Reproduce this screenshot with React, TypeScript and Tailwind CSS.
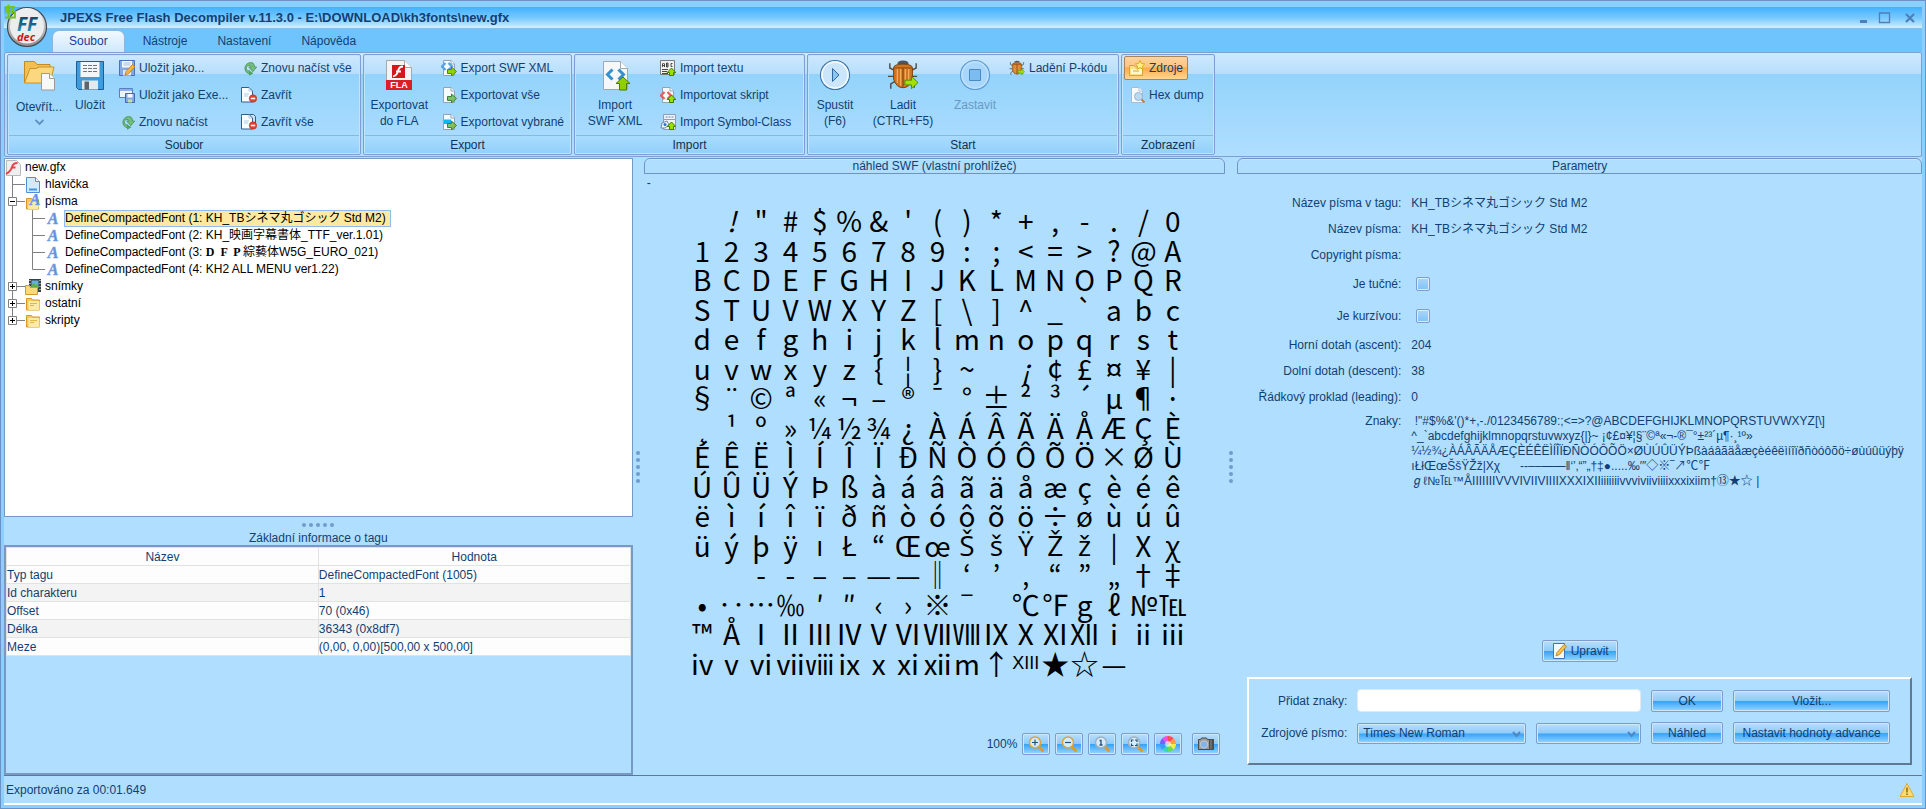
import { useState } from "react";
import type { ReactNode } from "react";
import { clsx } from "clsx";

type IconProps = { size?: number; children: ReactNode };

function Icon({ size = 16, children }: IconProps) {
  return (
    <svg width={size} height={size} viewBox={`0 0 ${size} ${size}`} className="shrink-0" aria-hidden="true">
      {children}
    </svg>
  );
}

const PAGE = "M2.5 .5h7.500l3.500 3.500v11.500h-11z";

function PageShape({ stroke = "#8fa3b8", fill = "#f7fafd" }: { stroke?: string; fill?: string }) {
  return (
    <>
      <path d={PAGE} fill={fill} stroke={stroke} />
      <path d="M10 .5v3.500h3.500" fill="#fff" stroke={stroke} />
    </>
  );
}

function GreenArrow({ fill = "#8fd400", stroke = "#4c8a00" }: { fill?: string; stroke?: string }) {
  return <path d="M6.500 9.500h4v-2.500l5 4.500-5 4.500v-2.500h-4z" fill={fill} stroke={stroke} />;
}

function UpArrow() {
  return <path d="M9.500 15.500v-3h-2.300l4.300-4.500 4.300 4.500h-2.300v3z" fill="#9be000" stroke="#3f7d00" />;
}

function SaveAsIcon() {
  return (
    <Icon>
      <path d="M.5.5h15v15h-15z" fill="#86a8e2" stroke="#4a70b8" />
      <path d="M3 1h10v6.500h-10z" fill="#f4f8ff" />
      <path d="M4.500 3h7M4.500 5h7" stroke="#a9bad6" />
      <path d="M4 10h8v5.500h-8z" fill="#dfe7f5" />
      <path d="M6 15l1-3.500 6.500-7 2.500 2.200-6.500 7z" fill="#f7b53c" stroke="#b97c18" strokeWidth=".8" />
    </Icon>
  );
}

function SaveExeIcon() {
  return (
    <Icon>
      <path d="M.5 1.500h13v9h-13z" fill="#eef4fd" stroke="#5a7fc0" />
      <path d="M1 2h12v2h-12z" fill="#8fb1e6" />
      <path d="M6.500 6.500h9v9h-9z" fill="#86a8e2" stroke="#4668ad" />
      <path d="M8.500 7h5v3.500h-5z" fill="#f4f8ff" />
      <path d="M9 12.500h4v3h-4z" fill="#bfe39b" />
    </Icon>
  );
}

function ReloadIcon() {
  return (
    <Icon>
      <path
        d="M12 3A5.800 5.800 0 1 0 8.500 14v-3.200A2.700 2.700 0 1 1 10.300 7H7.800l4 4.800L15.700 7H13.600A5.800 5.800 0 0 0 12 3z"
        fill="#72bd7c"
        stroke="#3f8a50"
        strokeWidth=".7"
      />
      <path d="M8 15.800v-5.300l4.500 2.700z" fill="#4ba35c" />
    </Icon>
  );
}

function CloseIcon({ all = false }: { all?: boolean }) {
  return (
    <Icon>
      {all && <path d="M4.500.5h8l2 2v11h-10z" fill="#cfe3f5" stroke="#2d5f8c" />}
      <path d="M.5 2.500v-2h7.500l3.500 3.500v11h-11z" fill="#fbfdff" stroke="#2d5f8c" />
      <path d="M8 .8v3.200h3.300M3 7h5M3 9h4" fill="none" stroke="#b4c9dc" />
      <circle cx="12" cy="11.500" r="3.700" fill="#e2442c" stroke="#b32a17" strokeWidth=".6" />
      <path d="M9.800 11.500h4.400" stroke="#fff" strokeWidth="1.600" />
    </Icon>
  );
}

function ExportXmlIcon() {
  return (
    <Icon>
      <PageShape />
      <path d="M4.500 3l-3.500 3.500 3.500 3.500M7.500 3l3.500 3.500-3.500 3.500" fill="none" stroke="#5aa2e8" strokeWidth="2.400" />
      <GreenArrow />
    </Icon>
  );
}

function ExportIcon({ selected = false }: { selected?: boolean }) {
  return (
    <Icon>
      <PageShape />
      {selected && <path d="M3 5.500h7v4.500h-7z" fill="#12b6ee" />}
      <GreenArrow fill="#7cc06a" stroke="#3f7f35" />
    </Icon>
  );
}

function ImportTextIcon() {
  return (
    <Icon>
      <path d="M.5.5h14v14h-14z" fill="#f2f2f0" stroke="#7a7a7a" />
      <path
        d="M2.500 7v-3l1-1 1 1v3M2.500 5.500h2M6.500 3h1.500v4h-1.500zM6.500 5h1.500M12.500 3.500h-1.500v3h1.500M2 9.500h6M2 11.500h5M2 13.500h6"
        fill="none"
        stroke="#333"
        strokeWidth=".9"
      />
      <UpArrow />
    </Icon>
  );
}

function ImportScriptIcon() {
  return (
    <Icon>
      <PageShape />
      <path d="M4.500 5l-3.500 3.500 3.500 3.500M7.500 5l3.500 3.500-3.500 3.500" fill="none" stroke="#ea5f58" strokeWidth="2.400" />
      <UpArrow />
    </Icon>
  );
}

function ImportSymbolIcon() {
  return (
    <Icon>
      <path d="M3.500.5h12v5h-12zM3.500 5.500h12v10h-12z" fill="#eef3fa" stroke="#8c9db5" />
      <path d="M5.500 3h8" stroke="#6f87a8" strokeDasharray="2 1" />
      <path d="M1 14l1-5 5-2 2 4-4 3z" fill="#f5f8fc" stroke="#6f87a8" />
      <circle cx="5" cy="10.500" r="1.500" fill="#2b6fd0" />
      <UpArrow />
    </Icon>
  );
}

function BugShape() {
  return (
    <>
      <path
        d="M9 12L3 9V4M25 12l6-3V4M8 18H1M26 18h6M9 23l-5 3v5M25 23l4 3v4"
        fill="none"
        stroke="#4e4a46"
        strokeWidth="1.500"
      />
      <path d="M11 5q0-4 6-4t6 4z" fill="#4b5563" />
      <path d="M7 9q0-4 10-4t10 4v12q-3 9-10 9T7 21z" fill="#cf7420" stroke="#7a3c08" />
      <path d="M11 10v15M14.500 10v18M19.500 10v18M23 10v15" stroke="#f0ac5c" strokeWidth="1.400" />
      <path d="M17 9v20" stroke="#7a3c08" />
      <path d="M7.500 9h19" stroke="#8d4a0e" />
      <path d="M19 22h7v-4l7 6.500-7 6.500v-4h-7z" fill="#a4e000" stroke="#4c8a00" />
    </>
  );
}

function SourcesIcon() {
  return (
    <Icon>
      <path d="M.5 5.500h5l1 1.500h7v8.500h-13z" fill="#fbe08a" stroke="#d9a42e" />
      <path d="M2 9h11v5h-11z" fill="#fff6cf" />
      <path d="M4 11h6" stroke="#d9a42e" />
      <path d="M11 .5l1.500 3 3.200.4-2.300 2.200.6 3.200-3-1.600-3 1.600.6-3.200L6.300 3.900l3.200-.4z" fill="#fff08a" stroke="#dfa923" />
    </Icon>
  );
}

function HexIcon() {
  return (
    <Icon>
      <PageShape stroke="#a9bccf" />
      <circle cx="9.500" cy="9.500" r="4" fill="#bcd9f5" stroke="#93b4d6" />
      <path d="M12.500 12.500l3 3" stroke="#c9803f" strokeWidth="2" />
    </Icon>
  );
}

function OpenIcon() {
  return (
    <Icon size={32}>
      <path d="M1.500 24V2.500h10l2.500 3h13v4" fill="#f4bf52" stroke="#c58a1f" />
      <path d="M1.500 24L7 9.500h6l3-1.500h15l-4 16z" fill="#fbd880" stroke="#c9922a" />
      <path d="M18.500 14.500h8l5 5v11.500h-13z" fill="#f8f8f8" stroke="#9a9a9a" />
      <path d="M26.500 14.500v5h5" fill="#fff" stroke="#9a9a9a" />
    </Icon>
  );
}

function SaveIcon() {
  return (
    <Icon size={32}>
      <path d="M2.500 2.500h27v28h-25l-2-2z" fill="#3f9bdc" stroke="#1c5f96" />
      <path d="M6.500 3h19v15h-19z" fill="#f3f5f7" />
      <path d="M9 6.500h14M9 9.500h14M9 12.500h14" stroke="#6f7780" strokeDasharray="4 1" />
      <path d="M8 21.500h16v9h-16z" fill="#e3e9ee" />
      <path d="M10.500 22.500h4.500v8h-4.500z" fill="#5a6570" />
    </Icon>
  );
}

function FlaIcon() {
  return (
    <Icon size={32}>
      <path d="M3.500 1.500h18l7 7v20h-25z" fill="#f4f4f4" stroke="#a8a8a8" />
      <path d="M21.500 1.500v7h7" fill="#fff" stroke="#a8a8a8" />
      <path d="M9 6h13v13h-13z" fill="#d8141c" />
      <path d="M20 7.500q-4 0-5 4.500t-5 5.500M13 12.500h5" fill="none" stroke="#fff" strokeWidth="1.800" />
      <path d="M3 21h26v10h-26z" fill="#dc1f26" />
      <text x="16" y="29" textAnchor="middle" fontSize="9" fontWeight="bold" fill="#fff" fontFamily="Liberation Sans, sans-serif">
        FLA
      </text>
    </Icon>
  );
}

function ImportXmlIcon() {
  return (
    <Icon size={32}>
      <path d="M4.500 2.500h17l7 7v21h-24z" fill="#f6f7f8" stroke="#9fa8b0" />
      <path d="M21.500 2.500v7h7" fill="#fff" stroke="#9fa8b0" />
      <path d="M13.500 10.500l-5 5 5 5M19.500 10.500l5 5-5 5" fill="none" stroke="#3590cf" strokeWidth="3" />
      <path d="M20.500 31v-6.500h-3.500l7-6.500 7 6.500h-3.500v6.500z" fill="#8ed000" stroke="#4c7d00" />
    </Icon>
  );
}

function PlayIcon() {
  return (
    <Icon size={32}>
      <circle cx="16" cy="16" r="14.500" fill="#cbe6fb" stroke="#3f74a8" strokeWidth="1.200" />
      <circle cx="16" cy="16" r="13" fill="none" stroke="#f2f9ff" strokeWidth="1.600" />
      <path d="M13.500 9.500l6.500 6.500-6.500 6.500z" fill="#8cc4f0" stroke="#2f6ba3" />
    </Icon>
  );
}

function StopIcon() {
  return (
    <Icon size={32}>
      <circle cx="16" cy="16" r="14.500" fill="#a9d7fb" stroke="#5f9bd0" strokeWidth="1.200" />
      <circle cx="16" cy="16" r="13" fill="none" stroke="#bfe1fb" strokeWidth="1.400" />
      <path d="M10.500 10.500h11v11h-11z" fill="#7dbcf0" stroke="#4a8ac2" />
    </Icon>
  );
}

function Logo() {
  return (
    <svg width="48" height="46" viewBox="0 0 48 46" className="absolute top-0.5 left-0.5 z-10" role="img" aria-label="FFDec">
      <defs>
        <linearGradient id="logo-ring" x1="0" y1="0" x2="0" y2="1">
          <stop offset="0" stopColor="#f6f6f6" />
          <stop offset="1" stopColor="#8c8c8c" />
        </linearGradient>
        <linearGradient id="logo-ff" x1="0" y1="0" x2="0" y2="1">
          <stop offset="0" stopColor="#1c2f3c" />
          <stop offset=".5" stopColor="#17658f" />
          <stop offset="1" stopColor="#2fb4ea" />
        </linearGradient>
      </defs>
      <circle cx="24" cy="24" r="19.500" fill="url(#logo-ring)" stroke="#3e4a55" strokeWidth="1.200" />
      <circle cx="24" cy="23.500" r="17" fill="#ebedee" />
      <text x="24" y="28" textAnchor="middle" fontSize="19" fontWeight="bold" fontStyle="italic" fill="url(#logo-ff)" fontFamily="Open Sans, sans-serif">
        FF
      </text>
      <text x="23" y="38" textAnchor="middle" fontSize="11" fontWeight="bold" fontStyle="italic" fill="#cc1719" fontFamily="Open Sans, sans-serif">
        dec
      </text>
      <path d="M12 4H3v4.500h9v6H2M5.500 1.500v13.500M9 3v8" fill="none" stroke="#74c41c" strokeWidth="1.800" />
    </svg>
  );
}

const raised =
  "border border-[#7d9dcf] bg-[linear-gradient(#b9defc_0%,#8fcbfb_48%,#37a3fb_52%,#9ad6ff_100%)] shadow-[inset_0_0_0_1px_#cfe6fb] rounded-xs";

function LargeButton({
  icon,
  lines,
  width,
  disabled,
  menu,
}: {
  icon: ReactNode;
  lines: string[];
  width: string;
  disabled?: boolean;
  menu?: boolean;
}) {
  return (
    <button
      type="button"
      disabled={disabled}
      className={clsx("flex flex-col items-center pt-1 leading-4", width, disabled && "text-[#6a9ac4]")}
    >
      {icon}
      <span className={clsx("flex flex-col whitespace-nowrap", menu ? "pt-2" : "pt-1.5")}>
        {lines.map((line) => (
          <span key={line}>{line}</span>
        ))}
      </span>
      {menu && (
        <svg width="9" height="7" viewBox="0 0 9 7" className="mt-1" aria-hidden="true">
          <path d="M.5 1l4 4 4-4" fill="none" stroke="#5f8fc4" strokeWidth="1.800" />
        </svg>
      )}
    </button>
  );
}

function SmallButton({ icon, label, active }: { icon: ReactNode; label: string; active?: boolean }) {
  return (
    <button
      type="button"
      className={clsx(
        "flex h-6 items-center gap-1 self-start rounded-xs border px-1 whitespace-nowrap",
        active
          ? "border-[#a5855a] bg-[linear-gradient(#fbd3a0_0%,#ffc57c_45%,#ffaa48_50%,#ffd791_100%)]"
          : "border-transparent"
      )}
    >
      {icon}
      {label}
    </button>
  );
}

function SmallColumn({ className, children }: { className?: string; children: ReactNode }) {
  return <div className={clsx("flex flex-col gap-[3px] pt-px", className)}>{children}</div>;
}

function RibbonGroup({ title, width, children }: { title: string; width: string; children: ReactNode }) {
  return (
    <section
      className={clsx(
        "flex h-[101px] shrink-0 flex-col rounded-xs border border-[#7d9fd3] shadow-[inset_0_0_0_1px_#c4e2fb]",
        width
      )}
    >
      <div className="flex flex-1 px-0.5">{children}</div>
      <h2 className="mx-px mb-px h-[18px] border-t border-[#83bbe8] bg-[linear-gradient(#a9dcff,#93d0fb)] text-center leading-[19px] text-[#15304f]">
        {title}
      </h2>
    </section>
  );
}

function Ribbon() {
  return (
    <div className="flex gap-0.5 rounded-xs border border-[#7d9fd3] bg-[linear-gradient(#cfe9fe_0px,#b6dffc_21px,#93d3fb_21px,#b0deff_100%)] px-0.5 py-px">
      <RibbonGroup title="Soubor" width="w-[354px]">
        <LargeButton icon={<OpenIcon />} lines={["Otevřít..."]} width="w-[58px]" menu />
        <LargeButton icon={<SaveIcon />} lines={["Uložit"]} width="w-[44px]" />
        <SmallColumn className="w-[122px] pl-0.5">
          <SmallButton icon={<SaveAsIcon />} label="Uložit jako..." />
          <SmallButton icon={<SaveExeIcon />} label="Uložit jako Exe..." />
          <SmallButton icon={<ReloadIcon />} label="Znovu načíst" />
        </SmallColumn>
        <SmallColumn className="pl-0.5">
          <SmallButton icon={<ReloadIcon />} label="Znovu načíst vše" />
          <SmallButton icon={<CloseIcon />} label="Zavřít" />
          <SmallButton icon={<CloseIcon all />} label="Zavřít vše" />
        </SmallColumn>
      </RibbonGroup>
      <RibbonGroup title="Export" width="w-[209px]">
        <LargeButton icon={<FlaIcon />} lines={["Exportovat", "do FLA"]} width="w-[70px]" />
        <SmallColumn className="pl-[3px]">
          <SmallButton icon={<ExportXmlIcon />} label="Export SWF XML" />
          <SmallButton icon={<ExportIcon />} label="Exportovat vše" />
          <SmallButton icon={<ExportIcon selected />} label="Exportovat vybrané" />
        </SmallColumn>
      </RibbonGroup>
      <RibbonGroup title="Import" width="w-[231px]">
        <LargeButton icon={<ImportXmlIcon />} lines={["Import", "SWF XML"]} width="w-[76px]" />
        <SmallColumn className="pl-0.5">
          <SmallButton icon={<ImportTextIcon />} label="Import textu" />
          <SmallButton icon={<ImportScriptIcon />} label="Importovat skript" />
          <SmallButton icon={<ImportSymbolIcon />} label="Import Symbol-Class" />
        </SmallColumn>
      </RibbonGroup>
      <RibbonGroup title="Start" width="w-[312px]">
        <LargeButton icon={<PlayIcon />} lines={["Spustit", "(F6)"]} width="w-[50px]" />
        <LargeButton
          icon={
            <svg width="32" height="32" viewBox="0 0 34 33" className="shrink-0" aria-hidden="true">
              <BugShape />
            </svg>
          }
          lines={["Ladit", "(CTRL+F5)"]}
          width="w-[86px]"
        />
        <LargeButton icon={<StopIcon />} lines={["Zastavit"]} width="w-[58px]" disabled />
        <SmallColumn>
          <SmallButton
            icon={
              <svg width="16" height="16" viewBox="0 0 34 33" className="shrink-0" aria-hidden="true">
                <BugShape />
              </svg>
            }
            label="Ladění P-kódu"
          />
        </SmallColumn>
      </RibbonGroup>
      <RibbonGroup title="Zobrazení" width="w-[94px]">
        <SmallColumn>
          <SmallButton icon={<SourcesIcon />} label="Zdroje" active />
          <SmallButton icon={<HexIcon />} label="Hex dump" />
        </SmallColumn>
      </RibbonGroup>
    </div>
  );
}

function FolderShape() {
  return (
    <>
      <path d="M1.500 2.500h5l1 1.500h7v10h-13z" fill="#f7c95a" stroke="#d59a26" />
      <path d="M3.500 5h11v9h-11z" fill="#fdeaa6" />
      <path d="M5 7.500h7M5 9.500h4" stroke="#e5b548" />
    </>
  );
}

function FontLetter() {
  return (
    <text
      x="8"
      y="13"
      textAnchor="middle"
      fontSize="16"
      fontWeight="bold"
      fontStyle="italic"
      fontFamily="Liberation Serif, serif"
      fill="#5f8fdc"
      stroke="#7aa3e4"
      strokeWidth=".5"
    >
      A
    </text>
  );
}

const treeIcons: Record<string, ReactNode> = {
  file: (
    <Icon>
      <path d="M1.500.5h10l4 4v11h-14z" fill="#f0efef" stroke="#b9b9b9" />
      <path d="M12.500 3q-4.500 0-5.500 4t-6 7M6.500 7.500h4" fill="none" stroke="#e8404a" strokeWidth="2" />
    </Icon>
  ),
  header: (
    <Icon>
      <path d="M1.500.5h9l4 4v11h-13z" fill="#d3e9fd" stroke="#4f8fd6" />
      <path d="M10.500.5v4h4" fill="#fff" stroke="#4f8fd6" />
      <path d="M4 11.500h8v2h-8z" fill="#3f95ea" />
    </Icon>
  ),
  fonts: (
    <Icon>
      <path d="M1.500 4.500h5l1 1.500h6v9h-12z" fill="#f7c95a" stroke="#d59a26" />
      <path d="M4 8h11l-2 7h-10z" fill="#fdeaa6" />
      <g transform="translate(2 -2)">
        <FontLetter />
      </g>
    </Icon>
  ),
  font: (
    <Icon>
      <FontLetter />
    </Icon>
  ),
  frames: (
    <Icon>
      <path d="M4 0h12v13h-12z" fill="#3a3f45" />
      <path d="M6.500 1.500h7v7h-7z" fill="#5fb0e8" />
      <path d="M6.500 6l2-2 2 2 1-1 2 2v2h-7z" fill="#5fae4b" />
      <path d="M5 1v11M15 1v11" stroke="#fff" strokeDasharray="1 2" />
      <path d="M.5 6.500h4l1 2h7v7h-12z" fill="#fbd878" stroke="#d59a26" />
    </Icon>
  ),
  folder: (
    <Icon>
      <FolderShape />
    </Icon>
  ),
};

type Connector = "branch" | "line" | "last" | "minus" | "plus" | "plusLast";

function TreeConnector({ kind }: { kind: Connector }) {
  const box = kind === "minus" || kind === "plus" || kind === "plusLast";
  const bottom = kind === "last" || kind === "plusLast" ? 8.5 : 17;
  return (
    <svg width="20" height="17" viewBox="0 0 20 17" className="shrink-0" aria-hidden="true">
      <path d={`M7.500 0V${bottom}`} stroke="#808080" />
      {kind !== "line" && <path d="M7.500 8.500H20" stroke="#808080" />}
      {box && <path d="M3.500 4.500h8v8h-8z" fill="#fff" stroke="#808080" />}
      {box && <path d="M5 8.500h5" stroke="#000" />}
      {(kind === "plus" || kind === "plusLast") && <path d="M7.500 6v5" stroke="#000" />}
    </svg>
  );
}

type TreeRow = { id: string; connectors: Connector[]; icon: string; label: ReactNode };

const treeRows: TreeRow[] = [
  { id: "root", connectors: [], icon: "file", label: "new.gfx" },
  { id: "header", connectors: ["branch"], icon: "header", label: "hlavička" },
  { id: "fonts", connectors: ["minus"], icon: "fonts", label: "písma" },
  { id: "font1", connectors: ["line", "branch"], icon: "font", label: "DefineCompactedFont (1: KH_TBシネマ丸ゴシック Std M2)" },
  { id: "font2", connectors: ["line", "branch"], icon: "font", label: "DefineCompactedFont (2: KH_映画字幕書体_TTF_ver.1.01)" },
  {
    id: "font3",
    connectors: ["line", "branch"],
    icon: "font",
    label: (
      <>
        DefineCompactedFont (3: <b className="font-['Liberation_Serif',serif] whitespace-pre">{"D  F  P "}</b>綜藝体W5G_EURO_021)
      </>
    ),
  },
  { id: "font4", connectors: ["line", "last"], icon: "font", label: "DefineCompactedFont (4: KH2 ALL MENU ver1.22)" },
  { id: "frames", connectors: ["plus"], icon: "frames", label: "snímky" },
  { id: "others", connectors: ["plus"], icon: "folder", label: "ostatní" },
  { id: "scripts", connectors: ["plusLast"], icon: "folder", label: "skripty" },
];

function TagTree() {
  const [selected, setSelected] = useState("font1");

  return (
    <ul className="min-h-0 flex-[362] border border-[#7699c8] bg-white text-black">
      {treeRows.map((row) => (
        <li key={row.id} className="flex h-[17px] items-center">
          {row.connectors.map((kind, i) => (
            <TreeConnector key={i} kind={kind} />
          ))}
          {treeIcons[row.icon]}
          <button
            type="button"
            onClick={() => setSelected(row.id)}
            className={clsx(
              "ml-[3px] h-[17px] border pr-1 leading-[15px] whitespace-nowrap",
              selected === row.id ? "border-[#8fbbee] bg-[#fee9a0]" : "border-transparent"
            )}
          >
            {row.label}
          </button>
        </li>
      ))}
    </ul>
  );
}

const tagInfo = [
  ["Typ tagu", "DefineCompactedFont (1005)"],
  ["Id charakteru", "1"],
  ["Offset", "70 (0x46)"],
  ["Délka", "36343 (0x8df7)"],
  ["Meze", "(0,00, 0,00)[500,00 x 500,00]"],
];

function TagInfo() {
  return (
    <div className="min-h-0 flex-[229] border-2 border-[#7699c8]">
      <table className="w-full table-fixed border-collapse text-left">
        <thead>
          <tr className="h-[18px] bg-[#fdfdfd]">
            <th className="border border-[#e2e2e2] p-0 text-center leading-4 font-normal">Název</th>
            <th className="border border-[#e2e2e2] p-0 text-center leading-4 font-normal">Hodnota</th>
          </tr>
        </thead>
        <tbody>
          {tagInfo.map(([name, value]) => (
            <tr key={name} className="h-[18px] bg-[#fdfdfd] even:bg-[#f3f3f3]">
              <td className="border border-[#e2e2e2] p-0 leading-4">{name}</td>
              <td className="border border-[#e2e2e2] p-0 leading-4">{value}</td>
            </tr>
          ))}
        </tbody>
      </table>
    </div>
  );
}

function Grip({ vertical }: { vertical?: boolean }) {
  return (
    <div className={clsx("flex items-center justify-center", vertical ? "flex-col gap-px" : "h-[15px] gap-px")}>
      {[0, 1, 2, 3, 4].map((dot) => (
        <span key={dot} className={clsx("size-1 rounded-full bg-[#6f9ccc]", vertical ? "my-px" : "mx-px")} />
      ))}
    </div>
  );
}

const glyphRows: string[][] = [
  ["", ..."!\"#$%&'()*+,-./0"],
  [..."123456789:;<=>?@A"],
  [..."BCDEFGHIJKLMNOPQR"],
  [..."STUVWXYZ[\\]^_`abc"],
  [..."defghijklmnopqrst"],
  [..."uvwxyz{¦}~", "", ..."¡¢£¤¥|"],
  [..."§¨©ª«¬–®¯°±²³´µ¶·"],
  [..."¸¹º»¼½¾¿ÀÁÂÃÄÅÆÇÈ"],
  [..."ÉÊËÌÍÎÏÐÑÒÓÔÕÖ×ØÙ"],
  [..."ÚÛÜÝÞßàáâãäåæçèéê"],
  [..."ëìíîïðñòóôõö÷øùúû"],
  [..."üýþÿıŁ“ŒœŠšŸŽž|Xχ"],
  ["", "", ..."--––——‖‘’‚“”„†‡"],
  [..."•‥…‰′″‹›※‾", "", ..."℃℉gℓ№℡"],
  [..."™ÅⅠⅡⅢⅣⅤⅥⅦⅧⅨⅩⅪⅫⅰⅱⅲ"],
  [..."ⅳⅴⅵⅶⅷⅸⅹⅺⅻm↑", "XIII", ..."★☆—", "", ""],
];

// letters that the CJK family has no glyph for
const latinOnly = new Set("ıŁŠšŸŽžχ");

function GlyphGrid() {
  return (
    <div className="flex justify-center pl-1.5">
      <div className="grid h-[472px] w-[500px] grid-cols-17 grid-rows-16 font-['Noto_Sans_CJK_JP',sans-serif] text-[28px] leading-[29px] text-black">
        {glyphRows.flatMap((row, r) =>
          row.map((glyph, c) => (
            <span
              key={`${r}-${c}`}
              className={clsx(
                "flex items-center justify-center",
                glyph.length > 1 && "font-['Liberation_Sans',sans-serif] text-lg",
                latinOnly.has(glyph) && "font-['Open_Sans',sans-serif]",
                (glyph === "!" || glyph === "¡") && "italic"
              )}
            >
              {glyph}
            </span>
          ))
        )}
      </div>
    </div>
  );
}

function Lens({ ring = "#e0a43a", children }: { ring?: string; children: ReactNode }) {
  return (
    <>
      <path d="M10.500 10.500l4 4" stroke="#e09a2a" strokeWidth="3" strokeLinecap="round" />
      <circle cx="7" cy="6.500" r="5.500" fill="#d6ecfb" stroke={ring} strokeWidth="1.500" />
      {children}
    </>
  );
}

const wheelColors = ["#ff4d4d", "#ff9c40", "#f4ee3c", "#66e04a", "#35d6b4", "#3b9cff", "#7a5cff", "#f04fe0"];

const previewTools = [
  {
    label: "Přiblížit",
    icon: (
      <Lens>
        <path d="M4 6.500h6M7 3.500v6" stroke="#274f74" strokeWidth="1.200" />
      </Lens>
    ),
  },
  {
    label: "Oddálit",
    icon: (
      <Lens>
        <path d="M4 6.500h6" stroke="#274f74" strokeWidth="1.200" />
      </Lens>
    ),
  },
  {
    label: "Původní velikost",
    icon: (
      <Lens ring="#9fb0bf">
        <path d="M5.500 4.500h1.500v4.500M5.500 9h3" fill="none" stroke="#274f74" strokeWidth="1.300" />
      </Lens>
    ),
  },
  {
    label: "Přizpůsobit",
    icon: (
      <Lens ring="#9fb0bf">
        <path d="M4.500 6v-2h2M8 4h2v2M10 7.500v2h-2M6.500 9.500h-2v-2" fill="none" stroke="#274f74" strokeWidth="1.200" />
      </Lens>
    ),
  },
  {
    label: "Barva pozadí",
    icon: (
      <>
        {wheelColors.map((color, i) => (
          <path key={color} d="M8 8V0A8 8 0 0 1 13.700 2.300z" fill={color} transform={`rotate(${i * 45} 8 8)`} />
        ))}
        <circle cx="8" cy="8" r="3" fill="#fff" opacity=".6" />
      </>
    ),
  },
];

function PanelTitle({ children }: { children: ReactNode }) {
  return (
    <h2 className="h-4 rounded-t-md border border-[#6f93c6] text-center leading-[15px] shadow-[inset_0_1px_0_#c9e6fd]">
      {children}
    </h2>
  );
}

function Preview() {
  return (
    <section className="flex min-h-0 flex-col">
      <PanelTitle>náhled SWF (vlastní prohlížeč)</PanelTitle>
      <p className="h-8 pl-[3px] leading-[18px]">-</p>
      <GlyphGrid />
      <div className="mt-auto mb-5 flex items-center justify-end gap-[5px] pr-[5px]">
        <span>100%</span>
        {previewTools.map((tool) => (
          <button key={tool.label} type="button" aria-label={tool.label} className={clsx("flex h-[22px] w-7 items-center justify-center", raised)}>
            <Icon>{tool.icon}</Icon>
          </button>
        ))}
        <button type="button" aria-label="Snímek" className={clsx("ml-[5px] flex h-[22px] w-7 items-center justify-center", raised)}>
          <Icon>
            <path d="M.5 3.500h2l1-1.500h5l1 1.500h6v10h-15z" fill="#9a9a9a" stroke="#4a4a4a" />
            <path d="M11 3h4.500v11H11z" fill="#4f4f4f" />
            <path d="M13 4v9" stroke="#8a8a8a" />
            <circle cx="6" cy="8.500" r="3.700" fill="#7fb4ea" stroke="#c9c9c9" />
          </Icon>
        </button>
      </div>
    </section>
  );
}

const charLines = [
  " !\"#$%&'()*+,-./0123456789:;<=>?@ABCDEFGHIJKLMNOPQRSTUVWXYZ[\\]",
  "^_`abcdefghijklmnopqrstuvwxyz{|}~ ¡¢£¤¥¦§¨©ª«¬-®¯°±²³´µ¶·¸¹º»",
  "¼½¾¿ÀÁÂÃÄÅÆÇÈÉÊËÌÍÎÏÐÑÒÓÔÕÖ×ØÙÚÛÜÝÞßàáâãäåæçèéêëìíîïðñòóôõö÷øùúûüýþÿ",
  "ıŁłŒœŠšŸŽž|Xχ      ‐-––—―‖‘’‚“”„†‡●.....‰′″◇※‾↗℃℉",
  "ℊℓ№℡™ÅIIIIIIIVVVIVIIVIIIIXXXIXIIiiiiiiivvviviiviiiixxxixiim†⑬★☆ |",
];

function Param({ label, children }: { label: string; children?: ReactNode }) {
  return (
    <div className="flex h-[26px] items-center gap-2.5">
      <dt className="w-[164px] text-right">{label}</dt>
      <dd>{children}</dd>
    </div>
  );
}

function CheckParam({ id, label }: { id: string; label: string }) {
  return (
    <div className="flex h-8 items-center gap-2.5">
      <label htmlFor={id} className="w-[164px] text-right">
        {label}
      </label>
      <input
        id={id}
        type="checkbox"
        className="ml-[5px] size-3.5 appearance-none rounded-xs border border-[#7d9dcf] bg-[linear-gradient(#a9d7fc,#7cc3fb)] shadow-[inset_0_0_0_1px_#d8ecfd] checked:bg-[#2f8de0]"
      />
    </div>
  );
}

function PushButton({ children, className }: { children: ReactNode; className?: string }) {
  return (
    <button type="button" className={clsx("h-[22px] text-center whitespace-nowrap", raised, className)}>
      {children}
    </button>
  );
}

function Dropdown({ id, options, label, className }: { id: string; options: string[]; label?: string; className?: string }) {
  return (
    <span className={clsx("relative block", className)}>
      <select id={id} aria-label={label} className={clsx("block h-[21px] w-full appearance-none pl-[5px] leading-[19px]", raised)}>
        {options.map((option) => (
          <option key={option}>{option}</option>
        ))}
      </select>
      <svg width="9" height="7" viewBox="0 0 9 7" className="pointer-events-none absolute top-2 right-[5px]" aria-hidden="true">
        <path d="M1 1l3.500 4L8 1" fill="none" stroke="#4f86c2" strokeWidth="2" />
      </svg>
    </span>
  );
}

function Parameters() {
  const [chars, setChars] = useState("");

  return (
    <section className="flex min-h-0 flex-col">
      <PanelTitle>Parametry</PanelTitle>
      <dl className="pt-4">
        <Param label="Název písma v tagu:">KH_TBシネマ丸ゴシック Std M2</Param>
        <Param label="Název písma:">KH_TBシネマ丸ゴシック Std M2</Param>
        <Param label="Copyright písma:" />
      </dl>
      <CheckParam id="bold" label="Je tučné:" />
      <CheckParam id="italic" label="Je kurzívou:" />
      <dl>
        <Param label="Horní dotah (ascent):">204</Param>
        <Param label="Dolní dotah (descent):">38</Param>
        <Param label="Řádkový proklad (leading):">0</Param>
        <div className="flex gap-2.5 pt-1 leading-[15px]">
          <dt className="w-[164px] text-right">Znaky:</dt>
          <dd>
            {charLines.map((line) => (
              <span key={line} className="block h-[15px] whitespace-pre">
                {line}
              </span>
            ))}
          </dd>
        </div>
      </dl>
      <div className="mt-auto flex justify-center">
        <PushButton className="flex items-center gap-1 px-2">
          <Icon>
            <path d="M2.500.5h11v15h-11z" fill="#f3f8fe" stroke="#3e74b8" />
            <path d="M5 13l1-3.500 7-8 2.500 2-7 8z" fill="#f7c04a" stroke="#b97c18" strokeWidth=".8" />
          </Icon>
          Upravit
        </PushButton>
      </div>
      <form
        className="mx-2.5 mt-[15px] mb-2.5 grid h-[88px] grid-cols-[98px_minmax(0,284fr)_minmax(0,72fr)_minmax(0,157fr)] content-start items-center gap-2.5 border-2 border-t-white border-r-[#5f7893] border-b-[#5f7893] border-l-white pt-2.5 pr-5"
        onSubmit={(e) => e.preventDefault()}
      >
        <label htmlFor="chars" className="text-right whitespace-nowrap">
          Přidat znaky:
        </label>
        <input
          id="chars"
          value={chars}
          onChange={(e) => setChars(e.target.value)}
          className="h-[23px] w-full rounded-sm border border-[#e4e9ee] bg-white px-1"
        />
        <PushButton>OK</PushButton>
        <PushButton>Vložit...</PushButton>
        <label htmlFor="font-family" className="text-right whitespace-nowrap">
          Zdrojové písmo:
        </label>
        <div className="flex gap-2.5">
          <Dropdown id="font-family" options={["Times New Roman"]} className="flex-[169]" />
          <Dropdown id="font-face" label="Řez písma" options={[""]} className="flex-[105]" />
        </div>
        <PushButton>Náhled</PushButton>
        <PushButton>Nastavit hodnoty advance</PushButton>
      </form>
    </section>
  );
}

const tabs = ["Soubor", "Nástroje", "Nastavení", "Nápověda"];

export default function App() {
  const [tab, setTab] = useState("Soubor");

  return (
    <div className="relative flex h-screen flex-col border border-[#6c92c6] bg-[#8bcffe] px-[3px] pt-1.5 pb-[3px] font-['Liberation_Sans','Noto_Sans_CJK_JP',sans-serif] text-xs text-[#123f72]">
      <Logo />
      <header className="flex h-[22px] shrink-0 items-center border-b border-[#83bfe6] bg-[linear-gradient(#42b1ff,#7ccaff_55%,#d3efff)] pl-14">
        <h1 className="flex-1 text-[13px] leading-[18px] font-bold">
          JPEXS Free Flash Decompiler v.11.3.0 - E:\DOWNLOAD\kh3fonts\new.gfx
        </h1>
        <div className="flex gap-2 pr-1 text-[#4f7fb8]">
          <button type="button" aria-label="Minimalizovat">
            <Icon>
              <path d="M2 10h7v3H2z" fill="currentColor" />
            </Icon>
          </button>
          <button type="button" aria-label="Maximalizovat" className="-ml-1">
            <Icon>
              <path d="M1.500 3h10v9.500h-10zM1 3h11" fill="none" stroke="currentColor" strokeWidth="1.300" />
            </Icon>
          </button>
          <button type="button" aria-label="Zavřít">
            <Icon>
              <path d="M4 4l8 8M12 4l-8 8" stroke="currentColor" strokeWidth="2.200" />
            </Icon>
          </button>
        </div>
      </header>
      <nav className="flex h-[23px] shrink-0 items-end bg-[#70c4fd] pl-[49px]">
        {tabs.map((name) => (
          <button
            key={name}
            type="button"
            onClick={() => setTab(name)}
            className={clsx(
              "h-[21px] rounded-t-md leading-[21px]",
              tab === name
                ? "mr-1 bg-[linear-gradient(#f2f9ff,#cfe8fd)] px-4 text-[#1d3a94] shadow-[0_0_0_1px_#8fb4e0]"
                : "px-[15px]"
            )}
          >
            {name}
          </button>
        ))}
      </nav>
      <Ribbon />
      <main className="grid min-h-0 flex-1 grid-cols-[minmax(0,629fr)_11px_minmax(0,582fr)_12px_minmax(0,685fr)] bg-[#b0deff] pt-px">
        <section className="flex min-h-0 flex-col">
          <TagTree />
          <Grip />
          <h2 className="h-[13px] text-center leading-3">Základní informace o tagu</h2>
          <TagInfo />
        </section>
        <Grip vertical />
        <Preview />
        <Grip vertical />
        <Parameters />
      </main>
      <footer className="flex h-[30px] shrink-0 items-center justify-between border-t border-b-2 border-t-[#5f7893] border-b-white bg-[#b0deff] pr-[7px] pl-0.5">
        <span>Exportováno za 00:01.649</span>
        <Icon>
          <path d="M8 1.500L15 14.500H1z" fill="#fcdc6e" stroke="#e2a92c" strokeLinejoin="round" />
          <path d="M8 5.500v5M8 11.500v1.500" stroke="#8a6414" strokeWidth="1.500" />
        </Icon>
      </footer>
    </div>
  );
}
